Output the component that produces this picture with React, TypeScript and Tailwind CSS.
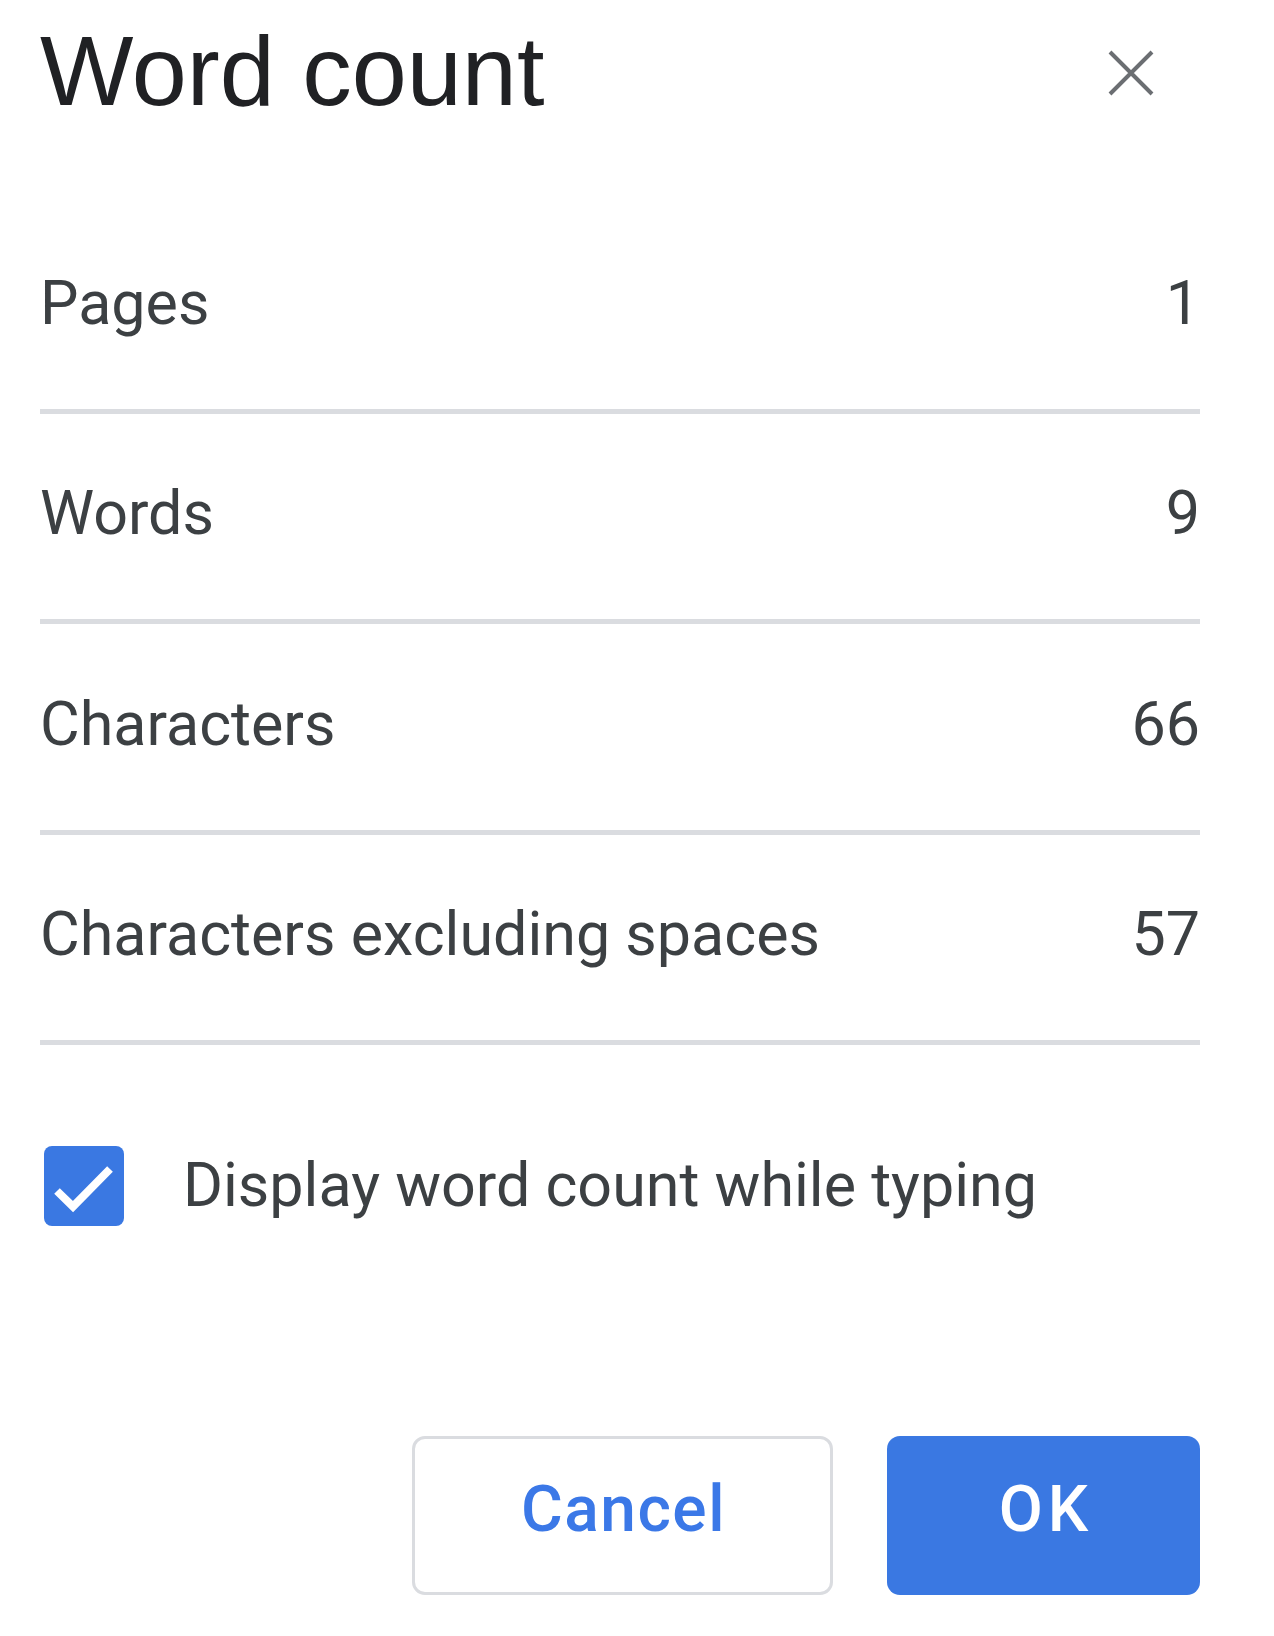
import { useState } from 'react';

const stats = [
  { label: 'Pages', value: '1' },
  { label: 'Words', value: '9' },
  { label: 'Characters', value: '66' },
  { label: 'Characters excluding spaces', value: '57' },
];

function CloseIcon() {
  return (
    <svg width="46" height="46" viewBox="0 0 46 46" fill="none" aria-hidden="true">
      <path d="M2 2L44 44M44 2L2 44" stroke="#6b6e72" strokeWidth="4" />
    </svg>
  );
}

function CheckIcon() {
  return (
    <svg width="80" height="80" viewBox="0 0 80 80" fill="none" aria-hidden="true">
      <path d="M13 45L29 60.5L66 23" stroke="#ffffff" strokeWidth="8" strokeLinejoin="miter" />
    </svg>
  );
}

export default function App() {
  const [showWhileTyping, setShowWhileTyping] = useState(true);

  return (
    <div className="min-h-[1636px] w-full bg-white pl-[40px] pr-[74px] font-['Roboto',sans-serif]">
      {/* Header */}
      <header className="flex h-[203px] items-start justify-between">
        <h1 className="mt-[21px] font-['Liberation_Sans',Arial,sans-serif] text-[99px] font-normal leading-none text-[#202124]">
          Word count
        </h1>
        <button
          type="button"
          aria-label="Close"
          className="mr-[22px] mt-[26px] flex h-[94px] w-[94px] items-center justify-center rounded-full"
        >
          <CloseIcon />
        </button>
      </header>

      {/* Stats */}
      <div>
        {stats.map((stat) => (
          <div
            key={stat.label}
            className="flex h-[210.5px] items-end justify-between border-b-[5px] border-[#dadce0] pb-[75px] text-[61px] leading-[61px] text-[#3c4043]"
          >
            <span>{stat.label}</span>
            <span>{stat.value}</span>
          </div>
        ))}
      </div>

      {/* Checkbox */}
      <label className="mt-[100.5px] flex h-[80px] cursor-pointer items-center gap-[59px] pl-[4px]">
        <button
          type="button"
          role="checkbox"
          aria-checked={showWhileTyping}
          onClick={() => setShowWhileTyping((v) => !v)}
          className={`flex h-[80px] w-[80px] items-center justify-center rounded-[8px] ${
            showWhileTyping ? 'bg-[#3a78e2]' : 'border-[5px] border-[#5f6368] bg-white'
          }`}
        >
          {showWhileTyping && <CheckIcon />}
        </button>
        <span className="text-[61px] leading-[61px] text-[#3c4043]">Display word count while typing</span>
      </label>

      {/* Footer buttons */}
      <div className="mt-[210px] flex justify-end gap-[54px]">
        <button
          type="button"
          className="flex h-[159px] w-[421px] items-center justify-center rounded-[13px] border-[3px] border-[#dadce0] bg-white pb-[10px] pl-[2px] text-[64px] font-medium leading-[64px] tracking-[1.5px] text-[#3b78e7]"
        >
          Cancel
        </button>
        <button
          type="button"
          className="flex h-[159px] w-[313px] items-center justify-center rounded-[13px] bg-[#3a78e2] pb-[10px] pl-[5px] text-[64px] font-medium leading-[64px] tracking-[5px] text-white"
        >
          OK
        </button>
      </div>
    </div>
  );
}
